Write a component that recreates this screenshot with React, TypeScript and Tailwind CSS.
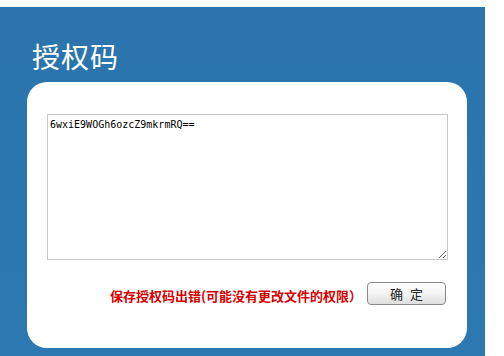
import React from "react";

const App = () => {
  return (
    <div className="w-[504px] h-[356px] bg-white pt-[7px] overflow-hidden">
      <div className="w-[485px] h-[349px] bg-gradient-to-b from-[#2b74ad] to-[#2c78b1] pt-[31px] pl-[27px] font-['Noto_Sans_CJK_SC',sans-serif]">
        {/* Title */}
        <h1 className="ml-[5px] text-[28px] leading-[36px] text-white font-normal tracking-[1px]">
          授权码
        </h1>

        {/* Card */}
        <div className="mt-[8px] w-[440px] h-[266px] bg-white rounded-[20px] pt-[32px] px-[20px]">
          <textarea
            className="block w-[401px] h-[146px] border border-[#c8c8c8] px-[2px] py-[3px] text-[10px] leading-[13px] text-black resize-y font-['DejaVu_Sans_Mono',monospace] outline-none"
            defaultValue="6wxiE9WOGh6ozcZ9mkrmRQ=="
          />

          <div className="flex items-center justify-end mt-[22px] pr-px gap-[5px]">
            <span className="text-[13px] leading-[16px] font-bold text-[#d40000] mt-[4px]">
              保存授权码出错(可能没有更改文件的权限）
            </span>
            <button className="w-[79px] h-[23px] rounded-[4px] border border-[#8a8a8a] bg-gradient-to-b from-white via-[#f4f4f4] to-[#dedede] text-[13px] leading-[20px] text-[#222] tracking-[2px] pl-[2px]">
              确 定
            </button>
          </div>
        </div>
      </div>
    </div>
  );
};

export default App;
